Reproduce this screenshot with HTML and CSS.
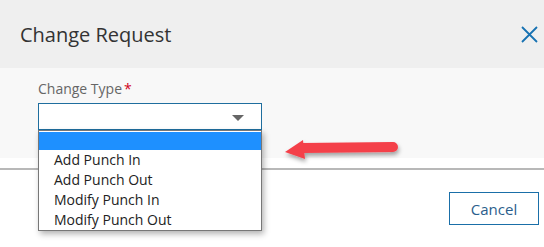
FILE: index.html
```html
<!DOCTYPE html>
<html lang="en">

<head>
    <meta charset="UTF-8">
    <meta name="viewport" content="width=device-width, initial-scale=1.0">
    <title>Change Request</title>
    <link rel="stylesheet" href="styles.css">
</head>

<body>
    <div class="modal">
        <div class="modal-header">
            <h1 class="modal-title">Change Request</h1>
            <button type="button" class="close-btn" aria-label="Close">
                <svg width="17" height="17" viewBox="0 0 17 17">
                    <path d="M1 1 L16 16 M16 1 L1 16" stroke="#1872b2" stroke-width="1.8" fill="none" />
                </svg>
            </button>
        </div>

        <div class="modal-body">
            <label class="field-label" for="changeType">Change Type<span class="required">*</span></label>
            <div class="select-wrap">
                <div class="select-box" id="changeType">
                    <span class="select-caret"></span>
                </div>
                <ul class="select-list">
                    <li class="option selected"></li>
                    <li class="option">Add Punch In</li>
                    <li class="option">Add Punch Out</li>
                    <li class="option">Modify Punch In</li>
                    <li class="option">Modify Punch Out</li>
                </ul>
            </div>

            <svg class="pointer-arrow" width="130" height="40" viewBox="0 0 130 40">
                <defs>
                    <filter id="arrowShadow" x="-20%" y="-50%" width="140%" height="200%">
                        <feDropShadow dx="1" dy="3" stdDeviation="2" flood-color="#000" flood-opacity="0.35" />
                    </filter>
                </defs>
                <g filter="url(#arrowShadow)">
                    <line x1="22" y1="14" x2="113" y2="13" stroke="#f4404a" stroke-width="10" stroke-linecap="round" />
                    <polygon points="5,18 23,6 25,25" fill="#f4404a" />
                </g>
            </svg>
        </div>

        <div class="modal-footer">
            <button type="button" class="btn-cancel">Cancel</button>
        </div>
    </div>
</body>

</html>
```

FILE: styles.css
```css
body {
    font-family: "Open Sans", "Noto Sans", sans-serif;
    background-color: #fff;
    margin: 0;
    padding: 0;
}

.modal {
    width: 544px;
    min-height: 247px;
}

.modal-header {
    display: flex;
    align-items: center;
    justify-content: space-between;
    height: 68px;
    padding: 0 6px 0 20px;
    background-color: #efefef;
    box-sizing: border-box;
}

.modal-title {
    margin: 0;
    font-size: 20px;
    font-weight: normal;
    color: #333;
}

.close-btn {
    background: none;
    border: none;
    padding: 0;
    width: 17px;
    height: 17px;
    margin-top: 1px;
    cursor: pointer;
}

.close-btn svg {
    display: block;
}

.modal-body {
    position: relative;
    height: 90px;
    padding: 11px 0 0 38px;
    background-color: #f8f8f8;
    box-sizing: border-box;
}

.field-label {
    display: block;
    height: 24px;
    font-size: 14px;
    line-height: 20px;
    color: #666;
}

.required {
    color: #d0021b;
    margin-left: 2px;
}

.select-wrap {
    position: relative;
    width: 224px;
}

.select-box {
    position: relative;
    height: 27px;
    border: 1px solid #1f6e9e;
    background-color: #fff;
    box-sizing: border-box;
}

.select-caret {
    position: absolute;
    right: 17px;
    top: 11px;
    width: 0;
    height: 0;
    border-left: 6px solid transparent;
    border-right: 6px solid transparent;
    border-top: 6px solid #666;
}

.select-list {
    position: absolute;
    top: 27px;
    left: 0;
    width: 224px;
    margin: 0;
    padding: 0;
    list-style: none;
    background-color: #fff;
    border: 1px solid #777;
    box-sizing: border-box;
    box-shadow: 2px 3px 6px rgba(0, 0, 0, 0.3);
    z-index: 2;
}

.option {
    height: 20px;
    padding-left: 15px;
    font-size: 14px;
    line-height: 20px;
    color: #222;
}

.option.selected {
    height: 18px;
    margin-top: 1px;
    background-color: #1e90ff;
}

.pointer-arrow {
    position: absolute;
    left: 280px;
    top: 66px;
}

.modal-footer {
    display: flex;
    justify-content: flex-end;
    align-items: flex-start;
    height: 79px;
    margin-top: 10px;
    padding: 22px 5px 0 0;
    border-top: 2px solid #b8b8b8;
    box-sizing: border-box;
}

.btn-cancel {
    width: 90px;
    height: 33px;
    background-color: #fff;
    border: 1.5px solid #1a6fa8;
    font-family: inherit;
    font-size: 15px;
    color: #2b5e8c;
    cursor: pointer;
}
```
